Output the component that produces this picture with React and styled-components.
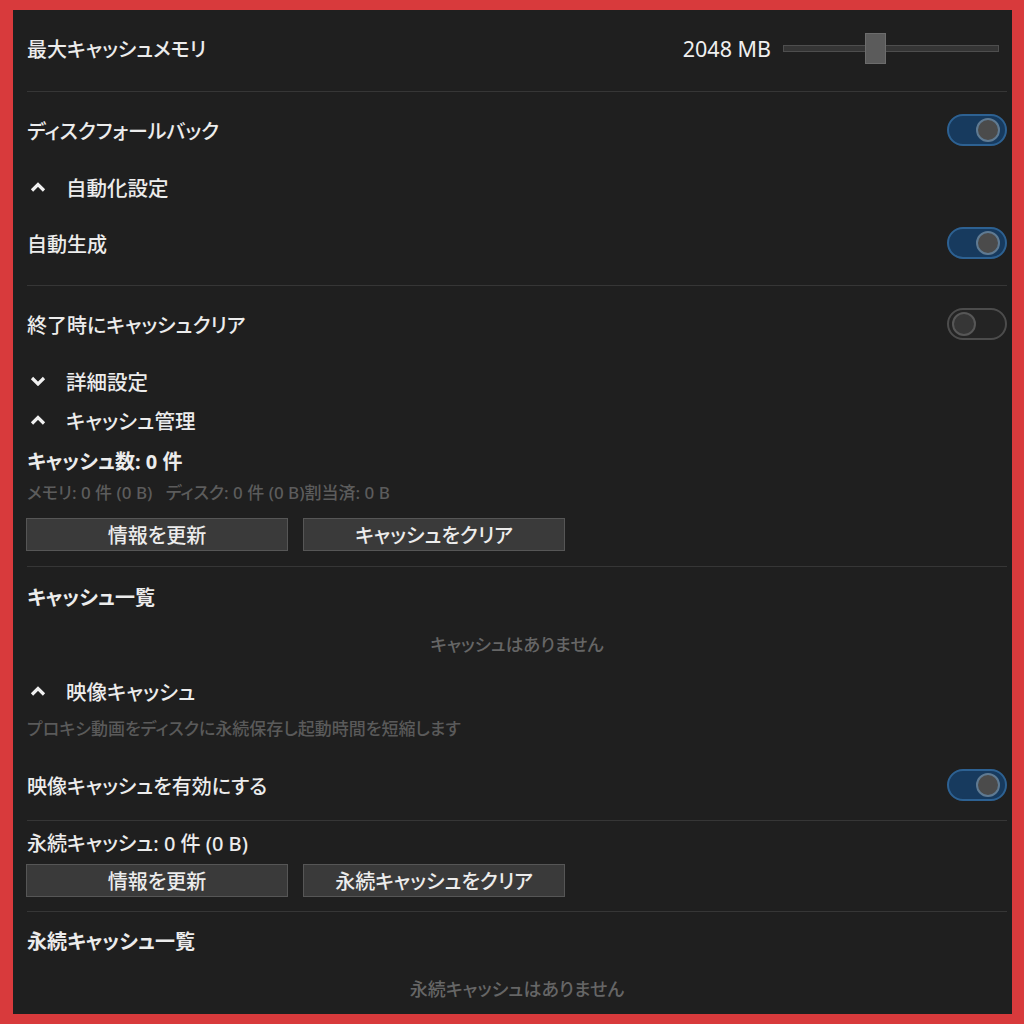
import React from 'react';
import styled, { createGlobalStyle } from 'styled-components';

const GlobalStyle = createGlobalStyle`
  html, body {
    margin: 0;
    padding: 0;
    background: #d83a3c;
  }
  body {
    font-family: "Noto Sans", "Noto Sans CJK JP", sans-serif;
    font-feature-settings: "palt";
  }
`;

const Frame = styled.div`
  width: 1024px;
  height: 1024px;
  box-sizing: border-box;
  padding: 10px 12px 10px 13px;
`;

const Panel = styled.div`
  height: 100%;
  box-sizing: border-box;
  background: #1f1f1f;
  padding: 14px 5px 0 14px;
  overflow: hidden;
  color: #ececec;
`;

const Row = styled.div`
  display: flex;
  align-items: center;
  justify-content: space-between;
  height: 48px;
  margin-top: ${(p) => p.$mt || 0}px;
`;

const Label = styled.span`
  font-size: 20px;
  font-weight: 500;
  color: #ececec;
`;

const Divider = styled.div`
  height: 1px;
  background: #363636;
  margin-top: ${(p) => p.$mt || 0}px;
`;

const Header = styled.div`
  display: flex;
  align-items: center;
  gap: 20px;
  height: 36px;
  padding-left: 3px;
  font-size: 20.5px;
  font-weight: 500;
  margin-top: ${(p) => p.$mt || 0}px;
`;

const Line = styled.div`
  height: ${(p) => p.$h || 28}px;
  display: flex;
  align-items: center;
  font-size: ${(p) => p.$size || 20}px;
  font-weight: ${(p) => (p.$bold ? 700 : 500)};
  color: ${(p) => p.$color || '#ececec'};
  justify-content: ${(p) => (p.$center ? 'center' : 'flex-start')};
  margin-top: ${(p) => p.$mt || 0}px;
  white-space: pre;
`;

const ButtonRow = styled.div`
  display: flex;
  gap: 15px;
  margin-top: ${(p) => p.$mt || 0}px;
`;

const Button = styled.button`
  width: 262px;
  height: 33px;
  box-sizing: border-box;
  background: #3a3a3a;
  border: 1px solid #565656;
  color: #ececec;
  font-family: inherit;
  font-feature-settings: "palt";
  font-size: 20px;
  font-weight: 500;
  padding: 0;
  margin-left: ${(p) => (p.$first ? '-1px' : 0)};
`;

const ValueGroup = styled.div`
  display: flex;
  align-items: center;
  gap: 12px;
  margin-right: 8px;
`;

const Value = styled.span`
  font-size: 21.5px;
  color: #f0f0f0;
`;

const Track = styled.div`
  position: relative;
  width: 216px;
  height: 7px;
  box-sizing: border-box;
  background: #353535;
  border: 1px solid #4e4e4e;
`;

const Thumb = styled.div`
  position: absolute;
  top: -13px;
  left: 81px;
  width: 21px;
  height: 31px;
  box-sizing: border-box;
  background: #5b5b5b;
  border: 1px solid #6c6c6c;
`;

const ToggleTrack = styled.div`
  position: relative;
  width: 60px;
  height: 32px;
  box-sizing: border-box;
  border-radius: 16px;
  border: 2px solid ${(p) => (p.$on ? '#2d6192' : '#4c4c4c')};
  background: ${(p) => (p.$on ? '#173a5e' : '#242424')};
`;

const ToggleKnob = styled.div`
  position: absolute;
  top: 2px;
  left: ${(p) => (p.$on ? '27px' : '3px')};
  width: 24px;
  height: 24px;
  box-sizing: border-box;
  border-radius: 50%;
  background: ${(p) => (p.$on ? '#4b4b4b' : '#363636')};
  border: 2px solid ${(p) => (p.$on ? '#5f7a92' : '#575757')};
`;

const Toggle = ({ on }) => (
  <ToggleTrack $on={on}>
    <ToggleKnob $on={on} />
  </ToggleTrack>
);

const Chevron = ({ up }) => (
  <svg width="16" height="10" viewBox="0 0 16 10">
    <polyline
      points={up ? '2,8.5 8,2.5 14,8.5' : '2,2 8,8 14,2'}
      fill="none"
      stroke="#f0f0f0"
      strokeWidth="3.2"
      strokeLinejoin="miter"
    />
  </svg>
);

export default function App() {
  return (
    <>
      <GlobalStyle />
      <Frame>
        <Panel>
          <Row>
            <Label>最大キャッシュメモリ</Label>
            <ValueGroup>
              <Value>2048 MB</Value>
              <Track>
                <Thumb />
              </Track>
            </ValueGroup>
          </Row>
          <Divider $mt={19} />
          <Row $mt={14}>
            <Label>ディスクフォールバック</Label>
            <Toggle on />
          </Row>
          <Header $mt={15}>
            <Chevron up />
            <span>自動化設定</span>
          </Header>
          <Row $mt={14}>
            <Label>自動生成</Label>
            <Toggle on />
          </Row>
          <Divider $mt={18} />
          <Row $mt={14}>
            <Label>終了時にキャッシュクリア</Label>
            <Toggle />
          </Row>
          <Header $mt={15}>
            <Chevron />
            <span>詳細設定</span>
          </Header>
          <Header $mt={3}>
            <Chevron up />
            <span>キャッシュ管理</span>
          </Header>
          <Line $mt={8} $bold>キャッシュ数: 0 件</Line>
          <Line $mt={5} $h={24} $size={17} $color="#5c5c5c">
            {'メモリ: 0 件 (0 B)   ディスク: 0 件 (0 B)割当済: 0 B'}
          </Line>
          <ButtonRow $mt={15}>
            <Button $first>情報を更新</Button>
            <Button>キャッシュをクリア</Button>
          </ButtonRow>
          <Divider $mt={15} />
          <Line $mt={15} $bold>キャッシュ一覧</Line>
          <Line $mt={19} $center $size={17.5} $color="#666666">キャッシュはありません</Line>
          <Header $mt={16}>
            <Chevron up />
            <span>映像キャッシュ</span>
          </Header>
          <Line $mt={6} $h={24} $size={17} $color="#5a5a5a">
            プロキシ動画をディスクに永続保存し起動時間を短縮します
          </Line>
          <Row $mt={22}>
            <Label>映像キャッシュを有効にする</Label>
            <Toggle on />
          </Row>
          <Divider $mt={11} />
          <Line $mt={7}>永続キャッシュ: 0 件 (0 B)</Line>
          <ButtonRow $mt={8}>
            <Button $first>情報を更新</Button>
            <Button>永続キャッシュをクリア</Button>
          </ButtonRow>
          <Divider $mt={14} />
          <Line $mt={14} $bold>永続キャッシュ一覧</Line>
          <Line $mt={20} $center $size={18} $color="#666666">永続キャッシュはありません</Line>
        </Panel>
      </Frame>
    </>
  );
}
